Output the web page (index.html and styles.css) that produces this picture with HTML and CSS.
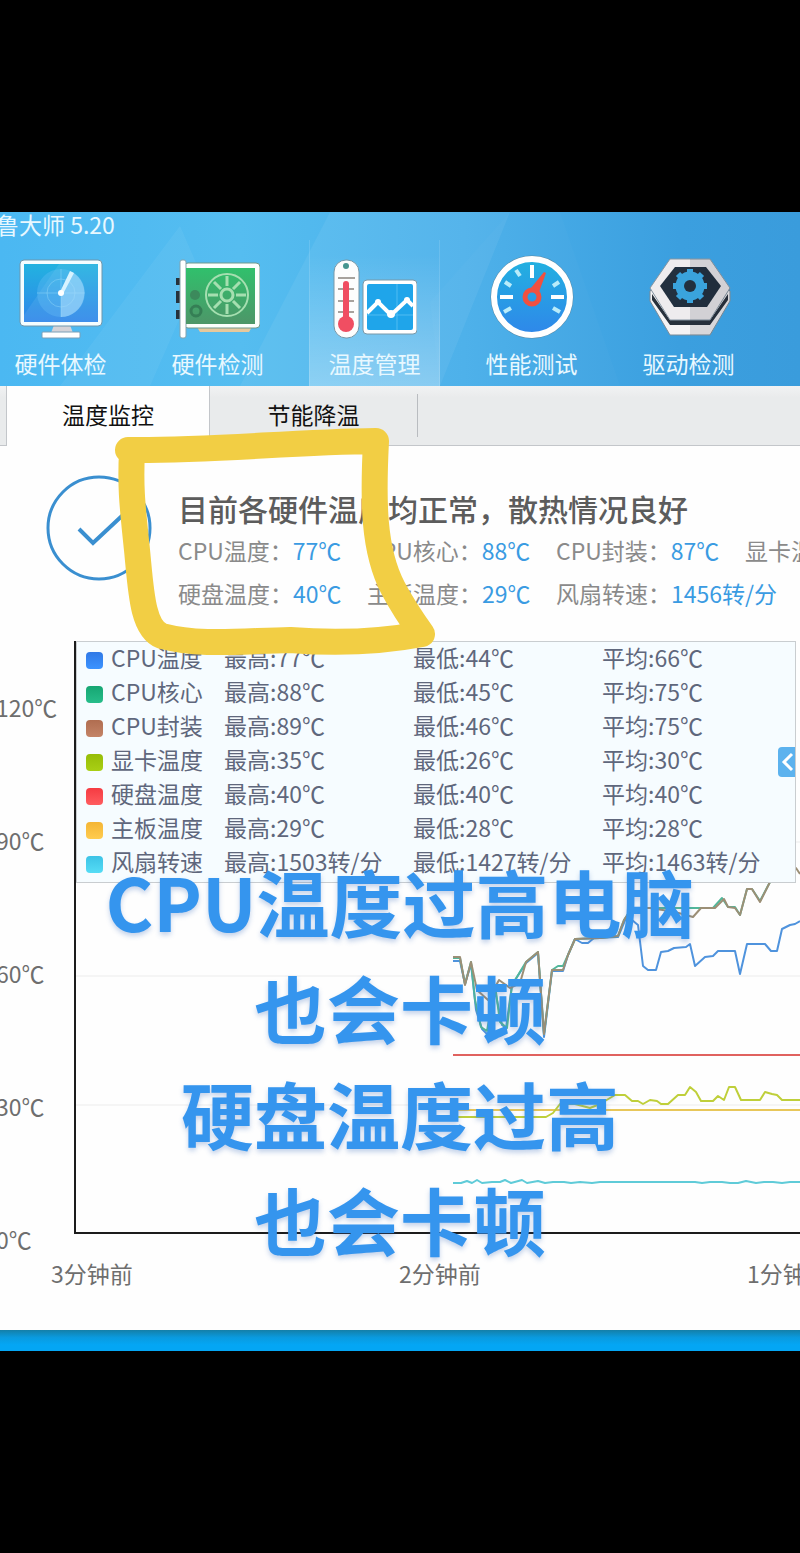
FILE: index.html
```
<!DOCTYPE html>
<html lang="zh-CN">
<head>
    <meta charset="UTF-8">
    <meta name="viewport" content="width=device-width, initial-scale=1.0">
    <title>鲁大师 5.20</title>
    <link rel="stylesheet" href="styles.css">
</head>
<body>
    <main class="window">
        <header class="header">
            <svg class="header-rays" viewBox="0 0 800 174" preserveAspectRatio="none" aria-hidden="true">
                <path d="M180 14L60 174H150L200 60Z" fill="#fff" opacity=".05"/>
                <path d="M330 0L240 174H440L510 0Z" fill="#fff" opacity=".06"/>
                <path d="M510 0L430 90L440 174H620L560 0Z" fill="#fff" opacity=".02"/>
            </svg>
            <h1 class="app-title">鲁大师 5.20</h1>
            <nav class="nav">
                <a class="nav-item" href="#">
                    <svg class="nav-icon" viewBox="0 0 84 84" aria-hidden="true">
                        <defs>
                            <linearGradient id="screen" x1="0" y1="0" x2="0" y2="1">
                                <stop offset="0" stop-color="#22b2e0"/>
                                <stop offset="1" stop-color="#2f86ea"/>
                            </linearGradient>
                        </defs>
                        <path d="M35 70H51L54 78H32Z" fill="#d5d3d8"/>
                        <rect x="23" y="77" width="38" height="6" rx="1" fill="#fff" stroke="#7b9fb8" stroke-width="1"/>
                        <rect x="1" y="5" width="82" height="66" rx="4" fill="#f4fdff" stroke="#6f96ac" stroke-width="1"/>
                        <rect x="5" y="9" width="74" height="58" fill="url(#screen)"/>
                        <path d="M5 67V60L40 9H79V67Z" fill="#fff" opacity=".08"/>
                        <circle cx="42" cy="38" r="24" fill="#6fc5f7" opacity=".3"/>
                        <circle cx="42" cy="38" r="14" fill="none" stroke="#8ed6f8" opacity=".5"/>
                        <path d="M42 14V62M18 38H66" stroke="#8ed6f8" opacity=".5"/>
                        <path d="M42 38L53 17A24 24 0 0 1 42 62Z" fill="#a8dcfb" opacity=".6"/>
                        <path d="M41 37L51 16L55 18L44 39Z" fill="#d8f3ff"/>
                        <circle cx="42" cy="38" r="3" fill="#fff"/>
                    </svg>
                    <span>硬件体检</span>
                </a>
                <a class="nav-item" href="#">
                    <svg class="nav-icon" viewBox="0 0 84 84" aria-hidden="true">
                        <defs>
                            <linearGradient id="board" x1="0" y1="0" x2="0" y2="1">
                                <stop offset="0" stop-color="#30c06c"/>
                                <stop offset="1" stop-color="#4d9668"/>
                            </linearGradient>
                        </defs>
                        <path d="M0 23H5V30H0ZM0 36H5V48H0ZM0 55H5V64H0Z" fill="#26323c"/>
                        <path d="M21 72H76L73 77H24Z" fill="#e6c89c"/>
                        <rect x="8" y="8" width="76" height="65" rx="4" fill="#fbfffc" stroke="#70998c" stroke-width="1"/>
                        <rect x="4" y="5" width="6" height="78" rx="2" fill="#fff" stroke="#85a3ae" stroke-width="1"/>
                        <rect x="10" y="13" width="69" height="56" fill="url(#board)"/>
                        <circle cx="19" cy="40" r="5" fill="#3c8a5c"/>
                        <circle cx="20" cy="56" r="5" fill="none" stroke="#357f55" stroke-width="3"/>
                        <g fill="none" stroke="#a5dfb0">
                            <circle cx="51" cy="40" r="21" stroke-width="2"/>
                            <circle cx="51" cy="40" r="6" stroke-width="3"/>
                            <path d="M51 31V21M51 49V59M42 40H32M60 40H70M45 34L38 27M57 34L64 27M45 46L38 53M57 46L64 53" stroke-width="3"/>
                        </g>
                    </svg>
                    <span>硬件检测</span>
                </a>
                <a class="nav-item active" href="#">
                    <svg class="nav-icon" viewBox="0 0 84 84" aria-hidden="true">
                        <rect x="1" y="5" width="25" height="78" rx="12" fill="#fdfdfd" stroke="#7898a8" stroke-width="1"/>
                        <circle cx="13" cy="11" r="3" fill="#46958f"/>
                        <path d="M5 23H22M5 34H21M5 46H21M5 57H21" stroke="#a7a29d" stroke-width="2"/>
                        <path d="M10 70V29A3 3 0 0 1 16 29V70Z" fill="#f04e62"/>
                        <circle cx="13" cy="69" r="8" fill="#f04e62"/>
                        <rect x="30" y="25" width="54" height="54" rx="4" fill="#fff" stroke="#7898a8" stroke-width="1"/>
                        <rect x="34" y="29" width="46" height="46" rx="2" fill="#1fa5ea"/>
                        <path d="M64 29V75M34 60H80" stroke="#51bcf2"/>
                        <path d="M34 58L45 47L58 60L74 45L80 51" fill="none" stroke="#fff" stroke-width="4"/>
                        <circle cx="45" cy="47" r="3" fill="#fff"/>
                        <circle cx="58" cy="59" r="4" fill="#fff"/>
                        <circle cx="74" cy="45" r="3" fill="#fff"/>
                    </svg>
                    <span>温度管理</span>
                </a>
                <a class="nav-item" href="#">
                    <svg class="nav-icon" viewBox="0 0 84 84" aria-hidden="true">
                        <circle cx="42" cy="42" r="39" fill="url(#screen)" stroke="#5889a5" stroke-width="5"/>
                        <circle cx="42" cy="42" r="38" fill="none" stroke="#fff" stroke-width="6"/>
                        <path d="M42 10V23M10 42H23M61 42H74" stroke="#fff" stroke-width="4"/>
                        <path d="M26 15L30 21M15 27L21 31M14 57L21 53M69 27L63 31M70 57L63 53" stroke="#b9ecfa" stroke-width="4"/>
                        <circle cx="42" cy="42" r="7" fill="none" stroke="#f1503f" stroke-width="5"/>
                        <path d="M41 33L54 17L56 18L49 37Z" fill="#f1503f"/>
                    </svg>
                    <span>性能测试</span>
                </a>
                <a class="nav-item" href="#">
                    <svg class="nav-icon" viewBox="0 0 84 84" aria-hidden="true">
                        <path d="M3 36L22 20H64L83 36V46L63 80H23L3 46Z" fill="#f5f3f4" stroke="#7b8b98" stroke-width="1"/>
                        <path d="M5 39L23 65H63L81 39V45L63 70H23L5 45Z" fill="#28313c"/>
                        <path d="M23 4H63L83 33L63 65H23L3 33Z" fill="#eeecee" stroke="#8595a2" stroke-width="1"/>
                        <path d="M28 12H59L74 31L60 52H27L13 31Z" fill="#22303f"/>
                        <path d="M43 4H63L83 33V46L63 80H43Z" fill="#14202e" opacity=".13"/>
                        <circle cx="43" cy="31" r="10" fill="none" stroke="#3aa3dc" stroke-width="9"/>
                        <path d="M43 14V48M26 31H60M31 19L55 43M55 19L31 43" stroke="#3aa3dc" stroke-width="6"/>
                        <circle cx="43" cy="31" r="6" fill="#22303f"/>
                    </svg>
                    <span>驱动检测</span>
                </a>
            </nav>
        </header>

        <div class="tabs">
            <button class="tab active" type="button">温度监控</button>
            <button class="tab" type="button">节能降温</button>
        </div>

        <section class="status">
            <svg class="status-icon" viewBox="0 0 106 106" aria-hidden="true">
                <circle cx="53" cy="53" r="51" fill="none" stroke="#3a8fd0" stroke-width="3"/>
                <path d="M33 54L47 68L78 39" fill="none" stroke="#3a8fd0" stroke-width="4"/>
            </svg>
            <div class="status-info">
                <h2>目前各硬件温度均正常，散热情况良好</h2>
                <ul class="readings">
                    <li>CPU温度：<b>77℃</b></li>
                    <li>CPU核心：<b>88℃</b></li>
                    <li>CPU封装：<b>87℃</b></li>
                    <li>显卡温度：<b>35℃</b></li>
                    <li>硬盘温度：<b>40℃</b></li>
                    <li>主板温度：<b>29℃</b></li>
                    <li>风扇转速：<b>1456转/分</b></li>
                </ul>
            </div>
        </section>

        <section class="chart">
            <div class="y-axis">
                <span>120℃</span>
                <span>90℃</span>
                <span>60℃</span>
                <span>30℃</span>
                <span>0℃</span>
            </div>
            <div class="plot-area">
                <div class="plot">
                    <svg class="lines" viewBox="76 641 724 591" preserveAspectRatio="none" aria-hidden="true">
                        <path d="M76 842H800M76 976H800M76 1105H800" stroke="#ececec"/>
                        <g fill="none" stroke-width="2" stroke-linejoin="round">
                            <path stroke="#5fcbd8" d="M453 1183H461L467 1181L472 1183L477 1180L482 1183L492 1182H500L505 1180L511 1183L522 1180L527 1183L538 1181L545 1183L553 1182H564L571 1183L580 1182L592 1183L600 1182H695L702 1183L710 1182H722L730 1183H738L746 1181L756 1183L764 1182H773L782 1183L790 1182H800"/>
                            <path stroke="#e8c75a" d="M453 1110H800"/>
                            <path stroke="#bfcf3a" d="M453 1117H546L553 1113L560 1104L575 1104L590 1108L600 1104L615 1095H625L632 1101H638L643 1104L650 1100L657 1101L661 1104H668L678 1095H685L690 1087L696 1092L701 1101H713L718 1096L724 1100L729 1087H735L741 1100H760L765 1092L772 1094L777 1095L782 1100H800"/>
                            <path stroke="#e0625f" d="M453 1055H800"/>
                            <path stroke="#4f93dd" d="M453 961H460L465 984L471 964L476 1010L482 1029L489 1036L495 990L502 1025L506 1028L512 985L526 963L538 953L544 1037L552 971H563L568 955L575 939L582 943H588L594 938L618 937L626 918L632 920L638 925L643 966L648 970H656L661 952L668 951L674 948L686 947L690 944L695 966L705 957L713 956L718 951H735L740 974L747 944H765L771 951H777L782 929L790 925L795 924L800 921"/>
                            <path stroke="#52b79a" d="M453 958H460L465 984L471 962L475 1000L481 1027L487 1031L495 985L500 1022L507 1028L512 985L526 962L538 952L544 1034L552 970L558 966H563L568 955L575 939L600 938L618 936L624 920L632 908H693L701 908H713L722 898L728 907H735L740 915L747 889H752L760 901L770 882L776 870"/>
                            <path stroke="#9c8f76" d="M453 957H460L465 985L471 962L477 990L488 1000L499 980L510 988L520 983L526 962L538 952L544 1034L552 970H563L568 955L575 939L600 938L618 936L624 920L632 908H650L675 912L693 917L701 908H715L724 899L728 907L735 908L740 915L747 889H752L760 902L770 882L776 870L796 868L800 874"/>
                        </g>
                    </svg>
                    <div class="legend">
                        <table>
                            <tr><td><i class="dot blue"></i></td><td>CPU温度</td><td>最高:77℃</td><td>最低:44℃</td><td>平均:66℃</td></tr>
                            <tr><td><i class="dot green"></i></td><td>CPU核心</td><td>最高:88℃</td><td>最低:45℃</td><td>平均:75℃</td></tr>
                            <tr><td><i class="dot brown"></i></td><td>CPU封装</td><td>最高:89℃</td><td>最低:46℃</td><td>平均:75℃</td></tr>
                            <tr><td><i class="dot lime"></i></td><td>显卡温度</td><td>最高:35℃</td><td>最低:26℃</td><td>平均:30℃</td></tr>
                            <tr><td><i class="dot red"></i></td><td>硬盘温度</td><td>最高:40℃</td><td>最低:40℃</td><td>平均:40℃</td></tr>
                            <tr><td><i class="dot yellow"></i></td><td>主板温度</td><td>最高:29℃</td><td>最低:28℃</td><td>平均:28℃</td></tr>
                            <tr><td><i class="dot cyan"></i></td><td>风扇转速</td><td>最高:1503转/分</td><td>最低:1427转/分</td><td>平均:1463转/分</td></tr>
                        </table>
                        <button class="collapse" type="button" aria-label="收起">
                            <svg viewBox="0 0 17 30" aria-hidden="true"><path d="M14 7L6 15L14 23" fill="none" stroke="#fff" stroke-width="3"/></svg>
                        </button>
                    </div>
                </div>
                <div class="x-axis">
                    <span>3分钟前</span>
                    <span>2分钟前</span>
                    <span>1分钟前</span>
                </div>
            </div>
        </section>

        <!-- hand-drawn highlight around the CPU / disk readings -->
        <svg class="marker" viewBox="110 420 330 240" aria-hidden="true">
            <path d="M128 450C210 451 290 442 376 441C373 500 373 550 393 588C402 605 412 620 422 634C380 642 340 644 290 640C240 641 200 646 162 636C142 628 141 590 137 550C133 510 130 490 132 452" fill="none" stroke="#f2ce44" stroke-width="26" stroke-linecap="round" stroke-linejoin="round"/>
        </svg>

        <p class="caption">CPU温度过高电脑<br>也会卡顿<br>硬盘温度过高<br>也会卡顿</p>
    </main>
    <div class="taskbar"></div>
</body>
</html>
```
FILE: styles.css
```
* {
    box-sizing: border-box;
}

body {
    margin: 0;
    padding: 212px 0 202px;
    background: #000;
    font-family: 'Noto Sans CJK SC', 'Noto Sans', sans-serif;
    font-size: 23px;
    line-height: 34px;
    overflow-x: hidden;
}

h1, h2, p, ul {
    margin: 0;
    padding: 0;
    font-weight: normal;
}

.window {
    position: relative;
    overflow: hidden;
    background: #fefefe;
}

.header {
    position: relative;
    background: linear-gradient(90deg, #4bb8f2 0%, #55bdf0 30%, #4bb0ea 58%, #3b9fdf 85%, #3a9cdc 100%);
    color: #e8f8ff;
}

.header-rays {
    position: absolute;
    inset: 0;
    width: 100%;
    height: 100%;
}

.app-title {
    position: relative;
    margin-left: -4px;
    padding-bottom: 4px;
    font-size: 23px;
    line-height: 24px;
}

.nav {
    position: relative;
    display: flex;
    gap: 26px;
    margin-left: -5px;
}

.nav-item {
    display: flex;
    flex: none;
    flex-direction: column;
    align-items: center;
    gap: 9px;
    width: 131px;
    padding: 15px 0 8px;
    color: #e8f8ff;
    line-height: 30px;
    text-decoration: none;
}

.nav-item.active {
    background: linear-gradient(180deg, rgba(255, 255, 255, 0) 10%, rgba(255, 255, 255, 0.3) 100%);
    box-shadow: inset 1px 0 rgba(255, 255, 255, 0.12), inset -1px 0 rgba(255, 255, 255, 0.12);
}

.nav-icon {
    width: 84px;
    height: 84px;
}

.tabs {
    display: flex;
    height: 60px;
    padding-left: 6px;
    background: linear-gradient(180deg, #f1f2f3, #e9ebec 20%);
    border-bottom: 1px solid #c3c6ca;
}

.tab {
    width: 208px;
    padding: 0 0 4px;
    border: none;
    background: none;
    color: #111;
    font: inherit;
}

.tab:not(.active) {
    margin: 8px 0;
    border-right: 1px solid #b9bcc0;
}

.tab.active {
    width: 204px;
    height: 60px;
    background: #fefefe;
    border: solid #c3c6ca;
    border-width: 0 1px;
}

.status {
    display: flex;
    gap: 26px;
    height: 195px;
    padding: 29px 0 0 46px;
}

.status-icon {
    flex: none;
    width: 106px;
    height: 106px;
}

.status-info {
    flex: 1;
    min-width: 0;
    color: #8a8a8a;
}

.status-info h2 {
    padding-top: 12px;
    color: #5c5c5c;
    font-size: 30px;
    font-weight: 500;
    line-height: 42px;
    white-space: nowrap;
}

.readings {
    display: grid;
    grid-template-columns: repeat(4, 189px);
    line-height: 43px;
    list-style: none;
    white-space: nowrap;
}

.readings b {
    color: #3a9be2;
    font-weight: normal;
}

.chart {
    display: flex;
    height: 689px;
}

.y-axis {
    display: flex;
    flex: none;
    flex-direction: column;
    width: 74px;
    color: #6e6e6e;
    line-height: 133px;
    text-indent: -4px;
}

.plot-area {
    flex: 1;
    min-width: 0;
}

.plot {
    position: relative;
    height: 593px;
    border-left: 2px solid #1c1c1c;
    border-bottom: 2px solid #1c1c1c;
}

.lines {
    display: block;
    width: 100%;
    height: 591px;
}

.legend {
    position: absolute;
    top: 0;
    left: 0;
    right: 4px;
    padding-bottom: 2px;
    background: #f6fcff;
    border: 1px solid #c9cdd0;
    color: #5f677c;
}

.legend table {
    width: 100%;
    border-collapse: collapse;
    table-layout: fixed;
    line-height: 30px;
    white-space: nowrap;
}

.legend td {
    height: 34px;
    padding: 0 0 4px;
}

.legend td:nth-child(1) {
    width: 34px;
    padding: 2px 0 0 9px;
}

.legend td:nth-child(2) {
    width: 113px;
}

.legend td:nth-child(3),
.legend td:nth-child(4) {
    width: 189px;
}

.dot {
    display: block;
    width: 17px;
    height: 17px;
    border-radius: 4px;
}

.blue { background: linear-gradient(#3079e6, #3b93ff); }
.green { background: linear-gradient(#16a672, #27bd8a); }
.brown { background: linear-gradient(#b06d50, #c48467); }
.lime { background: linear-gradient(#96bd08, #a9cf14); }
.red { background: linear-gradient(#f53b42, #ff5c5f); }
.yellow { background: linear-gradient(#f4b535, #ffcc4f); }
.cyan { background: linear-gradient(#3cc3e6, #55dcf5); }

.collapse {
    position: absolute;
    top: 105px;
    right: 0;
    width: 17px;
    height: 30px;
    padding: 0;
    border: none;
    border-radius: 4px 0 0 4px;
    background: #5cb2ee;
}

.collapse svg {
    display: block;
}

.x-axis {
    display: flex;
    margin: 22px 0 0 -23px;
    color: #6e6e6e;
    white-space: nowrap;
}

.x-axis span {
    flex: none;
    width: 348px;
}

.marker {
    position: absolute;
    top: 208px;
    left: 110px;
    width: 330px;
    height: 240px;
}

.caption {
    position: absolute;
    top: 635px;
    left: 0;
    right: 0;
    color: #3595ee;
    font-size: 73px;
    font-weight: bold;
    line-height: 106px;
    text-align: center;
    text-shadow: 0 3px 5px rgba(60, 110, 190, 0.3);
}

.taskbar {
    height: 21px;
    background: linear-gradient(180deg, #147fa8, #0a9ade 35%, #04a6f4 70%);
}
```
